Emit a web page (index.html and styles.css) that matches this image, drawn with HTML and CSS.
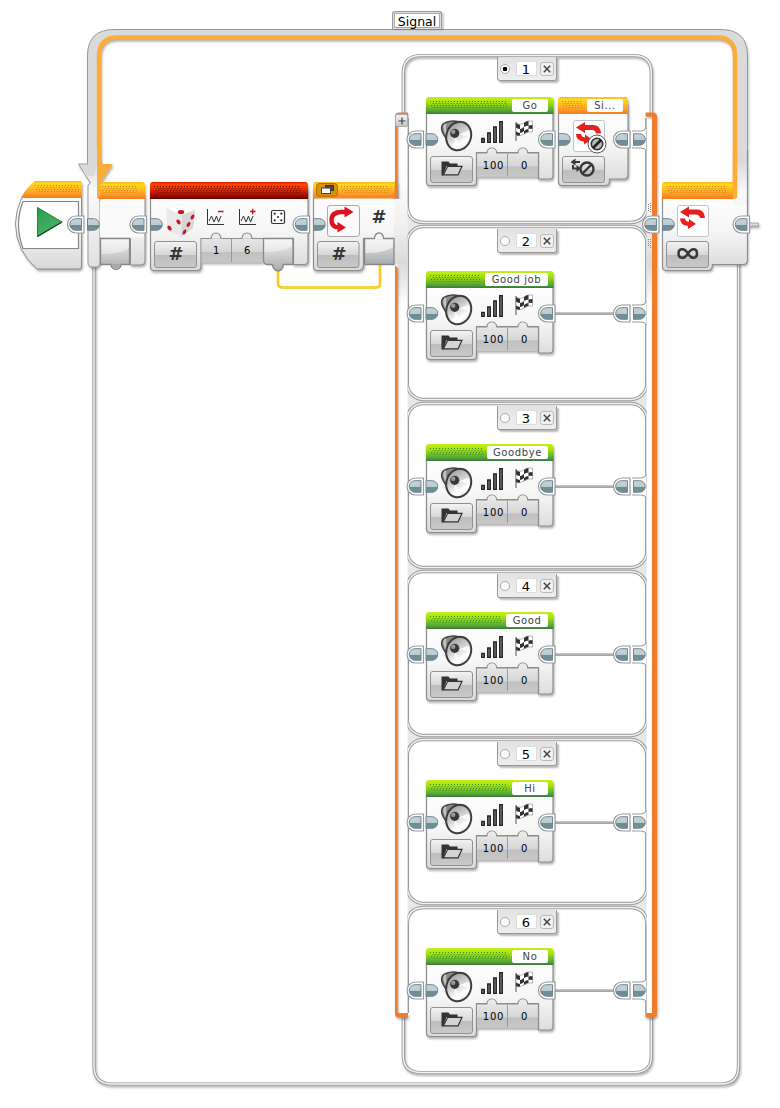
FILE: index.html
```html
<!DOCTYPE html>
<html lang="en">
<head>
<meta charset="utf-8">
<title>Signal program</title>
<link rel="stylesheet" href="styles.css">
</head>
<body>
<svg class="defs" width="0" height="0" aria-hidden="true">
  <defs>
    <linearGradient id="gGreen" x2="0" y2="1"><stop offset="0" stop-color="#c4f01c"/><stop offset=".3" stop-color="#a9e20d"/><stop offset=".85" stop-color="#4f9f3b"/><stop offset="1" stop-color="#38763c"/></linearGradient>
    <linearGradient id="gOrange" x2="0" y2="1"><stop offset="0" stop-color="#ffb31c"/><stop offset=".15" stop-color="#ffd91c"/><stop offset=".6" stop-color="#ffa928"/><stop offset="1" stop-color="#f67c1e"/></linearGradient>
    <linearGradient id="gRed" x2="0" y2="1"><stop offset="0" stop-color="#e01000"/><stop offset=".12" stop-color="#ff4a00"/><stop offset=".5" stop-color="#d92500"/><stop offset="1" stop-color="#6c0000"/></linearGradient>
    <linearGradient id="gBody" x2="0" y2="1"><stop offset="0" stop-color="#fff"/><stop offset=".5" stop-color="#f6f6f6"/><stop offset="1" stop-color="#d9d9d9"/></linearGradient>
    <linearGradient id="gBtn" x2="0" y2="1"><stop offset="0" stop-color="#f4f4f4"/><stop offset=".5" stop-color="#d7d7d7"/><stop offset=".52" stop-color="#bdbdbd"/><stop offset="1" stop-color="#c9c9c9"/></linearGradient>
    <linearGradient id="gVal" x2="0" y2="1"><stop offset="0" stop-color="#e6e6e6"/><stop offset=".55" stop-color="#d6d6d6"/><stop offset=".57" stop-color="#c0c0c0"/><stop offset="1" stop-color="#c8c8c8"/></linearGradient>
    <linearGradient id="gSlot" x2="0" y2="1"><stop offset="0" stop-color="#efeff0"/><stop offset=".5" stop-color="#cfcfd1"/><stop offset="1" stop-color="#a9aaad"/></linearGradient>
    <linearGradient id="gPlug" x2="0" y2="1"><stop offset="0" stop-color="#c6d3d9"/><stop offset=".5" stop-color="#bccbd2"/><stop offset=".52" stop-color="#6e8a92"/><stop offset="1" stop-color="#738f97"/></linearGradient>
    <linearGradient id="gPillar" gradientUnits="userSpaceOnUse" x1="0" y1="170" x2="0" y2="306"><stop offset="0" stop-color="#fff"/><stop offset=".4" stop-color="#f1f1f1"/><stop offset=".68" stop-color="#dadada"/><stop offset="1" stop-color="#fff"/></linearGradient>
    <linearGradient id="gLoop" gradientUnits="userSpaceOnUse" x1="0" y1="160" x2="0" y2="268"><stop offset="0" stop-color="#d9d9d9"/><stop offset=".3" stop-color="#fafafa"/><stop offset="1" stop-color="#e0e0e0"/></linearGradient>
    <linearGradient id="gPlay" x2=".5" y2="1"><stop offset="0" stop-color="#2a9c4a"/><stop offset="1" stop-color="#4db36b"/></linearGradient>
    <linearGradient id="gCone" x2="1" y2="1"><stop offset="0" stop-color="#8c8c8c"/><stop offset=".4" stop-color="#c9c9c9"/><stop offset=".7" stop-color="#fff"/><stop offset="1" stop-color="#ddd"/></linearGradient>

    <!-- plugs: the flat side lies on x = 0 -->
    <symbol id="plug-in" viewBox="-2 -9 18 18"><path d="M0-5.800H6A5.800 5.800 0 0 1 6 5.800H0Z" fill="url(#gPlug)" stroke="#6d8790"/></symbol>
    <symbol id="plug-out" viewBox="-17 -10 20 20"><path d="M1-8.500H-7A8.500 8.500 0 0 0-7 8.500H1Z" fill="#fff" stroke="#999" stroke-width="1.200"/><path d="M-1.500-5.800H-7.500A5.800 5.800 0 0 0-7.500 5.800H-1.500Z" fill="url(#gPlug)" stroke="#6d8790"/></symbol>
    <symbol id="cross" viewBox="0 0 12 12"><path d="M2.800 2.800 9.200 9.200M9.200 2.800 2.800 9.200" stroke="#444" stroke-width="1.500"/></symbol>

    <g id="speaker">
      <path d="M5 2Q11-.5 18 1.200L14 25Q7 22 3 14Q-2 5 5 2Z" fill="#8a8a8a" stroke="#444" stroke-width="1.500"/>
      <path d="M5 3.500Q2 7 7 16" stroke="#c4c4c4" stroke-width="2.500" fill="none"/>
      <ellipse cx="18" cy="15.500" rx="12.300" ry="14.500" transform="rotate(18 18 15.500)" fill="url(#gCone)" stroke="#3d3d3d" stroke-width="2"/>
      <path d="M18 14 28 10 29 16ZM15 17 12 27 20 28Z" fill="#fff" opacity=".8"/>
      <circle cx="14" cy="12.800" r="4.600" fill="#3a3a3a"/><circle cx="12.500" cy="11.300" r="2.200" fill="#999"/>
    </g>
    <g id="bars" fill="#777" stroke="#222" stroke-width="1.300"><path d="M.7 17.500h2.600v3.800H.7ZM6.700 12h2.600v9.300H6.700ZM12.700 6h2.600v15.300h-2.600ZM18.700.7h2.600v20.600h-2.600Z"/></g>
    <g id="flag">
      <path d="M1 2V21" stroke="#777" stroke-width="1.300"/>
      <path d="M1 3Q5 6 9 3T17.500 1V12Q13 11 9 14T1 15Z" fill="#fff" stroke="#999" stroke-width=".7"/>
      <path d="M1 3Q3 5 5 4.700V9Q3 9 1 7.500ZM9 3Q11 1 13.500 1V5.500Q11 5.500 9 7ZM5 9Q7 9 9 7V11Q7 13 5 13ZM13.500 5.500 17.500 5V9Q16 8.500 13.500 9ZM1 11.500Q3 12.500 5 13V15.500Q3 16 1 15ZM9 11Q11 9 13.500 9V12Q11 12 9 14Z" fill="#333"/>
    </g>
    <g id="folder">
      <path d="M0 15V1H7L8.500 3H16V5.500H5L1.500 15Z" fill="#333"/>
      <path d="M6.200 5.800H20.500L16.500 14.400H1.800Z" fill="#d4d4d4" stroke="#333" stroke-width="1.200"/>
    </g>
    <g id="dots"><path d="M0 .5H400" stroke-dasharray="1 2"/><path d="M1.500 2.500H400M0 4.500H400" stroke-dasharray="1 2" transform="translate(1)"/><path d="M3.500 6.500H400" stroke-dasharray="1 2"/></g>
    <g id="loopicon" fill="#e5201e"><path d="M0 5.500 9 0V3H17Q24.500 3 25 11.500H20Q19.500 8 16 8H9V11ZM0 12H5Q5.500 15 9 15.500V12.500L16 17.500 8 22.500V19.500Q0 18.500 0 12Z"/></g>

    <!-- sound block, local origin at the header's top left corner -->
    <symbol id="sound" viewBox="-20 -2 156 96">
      <g class="shadow">
        <path d="M.5 10H127V78.500Q127 82 124 82H112.500V55.500H50.500V85Q50.500 88.500 47 88.500H4Q.5 88.500 .5 85Z" fill="url(#gBody)" stroke="#8d8d8d" stroke-width="1.200"/>
        <path d="M0 17V3Q0 0 3 0H124.500Q127.500 0 127.500 3V17Z" fill="url(#gGreen)"/>
        <path d="M51 56H112V80H51Z" fill="url(#gVal)"/>
      </g>
      <path d="M50.500 56H60.800Q61.500 51 65.800 51T70.800 56H91.800Q92.500 51 96.800 51T101.800 56H112.500V81" fill="none" stroke="#8d8d8d" stroke-width="1.200"/>
      <path d="M61.400 56.600Q62 51.600 65.800 51.600T70.200 56.600ZM92.400 56.600Q93 51.600 96.800 51.600T101.200 56.600Z" fill="#e9e9e9"/>
      <path d="M81.500 57V79" stroke="#999"/>
      <rect x="4.500" y="59.500" width="42" height="26" rx="2.500" fill="url(#gBtn)" stroke="#929292"/>
      <use href="#speaker" x="14.700" y="23.500"/><use href="#bars" x="55" y="24"/><use href="#flag" x="89" y="23"/><use href="#folder" x="15.500" y="63.500"/>
      <use href="#plug-in" x="-2" y="33.500" width="18" height="18"/>
      <use href="#plug-out" x="111" y="32.500" width="20" height="20"/>
    </symbol>
    <!-- right-hand end of a case without further blocks -->
    <g id="ends"><path d="M632 131H641Q645.500 131 646 127.500V151Q645.500 148 641 148H632Z" fill="#fff"/><path d="M632 131H641Q645.500 131 646 127.500M632 148H641Q645.500 148 646 151" fill="none" stroke="#999"/><use href="#plug-out" x="612" y="129.500" width="20" height="20"/><use href="#plug-in" x="631.500" y="130.500" width="18" height="18"/></g>
    <g id="case-blocks"><path d="M554 139.500H618" class="wire"/><path d="M554 138.800H618" class="wire-top"/><use href="#plug-out" x="405.500" y="129.500" width="20" height="20"/><use href="#sound" x="406" y="95" width="156" height="96"/><use href="#ends"/></g>
    <clipPath id="inner"><rect x="407.600" y="50" width="239" height="1030"/></clipPath>
  </defs>
</svg>

<main class="program">
  <!-- frames: loop outline, switch pillars and case panels -->
  <svg class="scene" viewBox="0 0 780 1108">
    <g class="shadow">
      <path d="M94 262V1066Q94 1084 112 1084H721Q738.500 1084 738.500 1066V262" class="frame-dark"/>
    </g>
    <path d="M94 262V1066Q94 1084 112 1084H721Q738.500 1084 738.500 1066V262" class="frame-light"/>

    <g class="shadow">
      <path d="M87.500 170V56Q87.500 29.500 114 29.500H721Q747.500 29.500 747.500 56V190H736V54Q736 38 720 38H116Q99 38 99 54V170Z" fill="#dadada"/>
      <path d="M99 170V56Q99 37.500 118 37.500H717Q735 37.500 735 56V190" fill="none" stroke="#fcac38" stroke-width="4.500"/>
    </g>
    <path d="M87.500 164V56Q87.500 29.500 114 29.500H721Q747.500 29.500 747.500 56V190" fill="none" stroke="#999"/>

    <g class="shadow">
      <path d="M403.300 117V73Q403.300 55.500 421 55.500H634Q651.300 55.500 651.300 73V117" class="frame-dark"/>
      <path d="M403.300 1014V1056Q403.300 1072.500 421 1072.500H634Q651.300 1072.500 651.300 1056V1014" class="frame-dark"/>
    </g>
    <path d="M403.300 117V73Q403.300 55.500 421 55.500H634Q651.300 55.500 651.300 73V117M403.300 1014V1056Q403.300 1072.500 421 1072.500H634Q651.300 1072.500 651.300 1056V1014" class="frame-light"/>

    <path d="M397.500 116H408V1014H397.500ZM646.500 116H653V1014H646.500Z" fill="url(#gPillar)"/>
    <g class="shadow">
      <path d="M408 112.500H399Q395 112.500 395 116V198H397.700V116.500H408ZM395 265V1014Q395 1017.500 399 1017.500H408V1013H397.700V268Z" fill="#ee7e2c"/>
      <path d="M645.500 112.500H653Q657 112.500 657 117V1013Q657 1017.500 653 1017.500H645.500V1013H652V116.500H645.500Z" fill="#ee7e2c"/>
    </g>

    <g clip-path="url(#inner)">
      <path d="M400 205H655V245H400ZM400 385H655V420H400ZM400 552H655V588H400ZM400 720H655V756H400ZM400 888H655V924H400Z" fill="#e8e8e8"/>
      <g class="panel">
        <path d="M407.300 118V205Q407.300 222.500 425 222.500H629Q646.800 222.500 646.800 205V118"/>
        <rect x="407.300" y="226.500" width="239.500" height="173" rx="16"/>
        <rect x="407.300" y="403.500" width="239.500" height="164" rx="16"/>
        <rect x="407.300" y="571.500" width="239.500" height="164" rx="16"/>
        <rect x="407.300" y="739.500" width="239.500" height="164" rx="16"/>
        <path d="M407.300 1013V924Q407.300 907.500 425 907.500H629Q646.800 907.500 646.800 924V1013"/>
      </g>
      <g class="frame-light">
        <path d="M407.300 205Q407.300 222.500 425 222.500H629Q646.800 222.500 646.800 205M407.300 924Q407.300 907.500 425 907.500H629Q646.800 907.500 646.800 924"/>
        <rect x="407.300" y="226.500" width="239.500" height="173" rx="16"/>
        <rect x="407.300" y="403.500" width="239.500" height="164" rx="16"/>
        <rect x="407.300" y="571.500" width="239.500" height="164" rx="16"/>
        <rect x="407.300" y="739.500" width="239.500" height="164" rx="16"/>
      </g>
    </g>
    <path d="M648.500 204V212M650.500 203V212M648.500 239V247M650.500 239V248" stroke="#888" stroke-dasharray="1 1"/>
    <path d="M278 268V283Q278 287.500 283 287.500H376Q380 287.500 380 283V264" fill="none" stroke="#f5c400" stroke-width="2.600"/>
    <path d="M278 268V283Q278 287.500 283 287.500H376Q380 287.500 380 283V264" fill="none" stroke="#ffd84a" stroke-width=".8"/>
  </svg>

  <div class="signal">Signal</div>
  <div class="expand"><svg viewBox="0 0 10 10"><path d="M5 1.500V8.500M1.500 5H8.500" stroke="#444" stroke-width="1.200"/></svg></div>

  <!-- main row of blocks -->
  <svg class="row" viewBox="0 150 780 150">
    <!-- start -->
    <g class="shadow">
      <path d="M35 181.500H79Q81.500 181.500 81.500 184V266Q81.500 269 79 269H37Q16 251 15.500 224Q16 198 35 181.500Z" fill="url(#gBody)" stroke="#8d8d8d"/>
      <path d="M35 181H79Q82 181 82 184V198H21Q26 188 35 181Z" fill="url(#gOrange)"/>
    </g>
    <path d="M23 201.500H78.500V248.500H23Q14 224 23 201.500Z" fill="#fff" stroke="#858585" stroke-width="1.200"/>
    <path d="M37.500 207.500V236.500L62 222Z" fill="url(#gPlay)" stroke="#178a3c"/>
    <path d="M37.500 236.500 62 222" stroke="#0c4f22" stroke-width="1.400"/>
    <use href="#dots" class="dots clip44" x="35" y="185"/>

    <!-- loop start -->
    <g class="shadow">
      <path d="M98 195H145V261Q145 265 141 265H130.500V238.500H99Z" fill="url(#gBody)" stroke="#8d8d8d"/>
      <path d="M88 160V164H78.500L90.500 183 88 185V262Q88 267 92 267H96Q100 267 100 262V160Z" fill="url(#gLoop)" stroke="#999"/>
      <path d="M97.500 164H113L101.500 181.500H97.500Z" fill="#fcac38"/>
      <path d="M101 182H142Q145 182 145 185V199H100Q97 199 97 195Z" fill="url(#gOrange)"/>
    </g>
    <path d="M88 150H97V166L94 176H86L80 165H88Z" fill="#dadada"/><path d="M87.500 150V164" stroke="#999"/>
    <path d="M97 150H101.300V182H100V197Q97 197 97 194Z" fill="#fcac38"/>
    <use href="#dots" class="dots clip35" x="102" y="186"/>
    <path d="M100 201H144V237H100Z" fill="#fafafa"/>
    <path d="M100.500 238.500H129.500V264.500H121A5 5 0 0 1 111 264.500H100.500Z" fill="url(#gSlot)" stroke="#888" stroke-width="1.300"/>
    <path d="M112 264H120V266Q119 269.500 116 269.500T112 266Z" fill="#a9aaad"/>
    <path d="M101.500 239.500H129V248Q120 254 101.500 254Z" fill="#fff" opacity=".45"/>

    <!-- random -->
    <g class="shadow">
      <path d="M150.500 190H308V261Q308 264.500 304 264.500H293.500V238.500H201V267Q201 270.500 197 270.500H154Q150.500 270.500 150.500 267Z" fill="url(#gBody)" stroke="#8d8d8d" stroke-width="1.200"/>
      <path d="M150 199V185Q150 182 153 182H305Q308 182 308 185V199Z" fill="url(#gRed)"/>
      <path d="M201.500 238.500H263V262.500H201.500Z" fill="url(#gVal)"/>
    </g>
    <path d="M201 238.500H211Q211.500 233 216 233T221 238.500H242Q242.500 233 247 233T252 238.500H263" fill="#ececec" stroke="#8d8d8d" stroke-width="1.200"/>
    <path d="M231.500 239V262" stroke="#999"/>
    <path d="M263.500 238.500H293V264.500H283A5 5 0 0 1 273 267Q273 264.500 271 264.500H267Q263.500 264.500 263.500 260Z" fill="url(#gSlot)" stroke="#888" stroke-width="1.300"/>
    <path d="M264.500 239.500H292V246Q283 252 264.500 252Z" fill="#fff" opacity=".45"/>
    <rect x="154.500" y="241.500" width="42" height="26" rx="2.500" fill="url(#gBtn)" stroke="#929292"/>
    <path d="M166.500 209 181 204.500 195 210 182 215Z" fill="#fff" stroke="#eaeaea" stroke-width=".6"/><path d="M166.500 209 182 215 181 237 167 229.500Z" fill="#e9e9e9"/><path d="M195 210 182 215 181 237 193 228Z" fill="#d6d6d6"/>
    <g fill="#d31021"><ellipse cx="181" cy="212" rx="3.300" ry="2"/><ellipse cx="178.500" cy="222" rx="1.800" ry="2.600" transform="rotate(-35 178.500 222)"/><ellipse cx="169.500" cy="228" rx="1.800" ry="2.700" transform="rotate(-35 169.500 228)"/><ellipse cx="192.500" cy="217" rx="1.600" ry="2.700" transform="rotate(28 192.500 217)"/><ellipse cx="188.500" cy="224.500" rx="1.600" ry="2.700" transform="rotate(28 188.500 224.500)"/><ellipse cx="184.500" cy="232" rx="1.600" ry="2.700" transform="rotate(28 184.500 232)"/></g>
    <g fill="none" stroke="#333"><path d="M207.500 209V224.500H224M209 221 211.500 216 214 222 216.500 216 218.500 222 221 216"/><path d="M239.500 209V224.500H256M241 221 243.500 216 246 222 248.500 216 250.500 222 253 216"/></g>
    <path d="M218 211.500H223.500M250 211.500H255.500M252.700 208.800V214.300" stroke="#d31021" stroke-width="1.400"/>
    <rect x="271.500" y="210.500" width="13" height="13" rx="1.500" fill="#fff" stroke="#333" stroke-width="1.200"/>
    <g fill="#333"><circle cx="274.700" cy="213.700" r="1.100"/><circle cx="281.300" cy="213.700" r="1.100"/><circle cx="278" cy="217" r="1.100"/><circle cx="274.700" cy="220.300" r="1.100"/><circle cx="281.300" cy="220.300" r="1.100"/></g>
    <use href="#dots" class="dots red clip145" x="154" y="186"/>

    <!-- switch -->
    <g class="shadow">
      <path d="M313.500 190H397V238.500H363.500V266Q363 270 359 270.500H317Q313.500 270.500 313.500 267Z" fill="url(#gBody)" stroke="#8d8d8d" stroke-width="1.200"/>
      <path d="M313 198.500V185Q313 182 316 182H397.500V196Q397 198.500 395 198.500Z" fill="url(#gOrange)"/>
    </g>
    <path d="M394 199H405V264.500H394Z" fill="url(#gPillar)"/>
    <path d="M395 180H397.600V196Q397 199 394 199Z" fill="#ee7e2c"/>
    <rect x="316.500" y="183.500" width="21" height="12.500" rx="3" fill="#d79403" stroke="#a86b0d"/>
    <rect x="325.500" y="185.500" width="8" height="5" fill="#444" stroke="#333"/><rect x="321.500" y="188" width="9" height="5.500" fill="#fff" stroke="#444"/>
    <rect x="327.500" y="205.500" width="32" height="31" rx="2.500" fill="#fbfbfb" stroke="#aaa"/>
    <path d="M345.500 212H341Q331.500 212.500 331.500 220Q331.500 227.500 339 227.500" fill="none" stroke="#e0101c" stroke-width="4.400"/>
    <path d="M344.500 206.500 353.500 212 344.500 217.500ZM337.500 222 346 227.500 337.500 232.500Z" fill="#e0101c"/>
    <rect x="317.500" y="241.500" width="41.500" height="26" rx="2.500" fill="url(#gBtn)" stroke="#929292"/>
    <path d="M364.500 238.500H374.500Q375 233 379 233T383.500 238.500H394V264.500H364.500Z" fill="url(#gSlot)" stroke="#888" stroke-width="1.300"/>
    <path d="M365.500 239.500H393V247Q384 253 365.500 253ZM375.200 239Q375.500 233.700 379 233.700T382.800 239Z" fill="#fff" opacity=".6"/>
    <use href="#dots" class="dots clip45" x="341" y="186"/>

    <!-- loop end -->
    <g class="shadow">
      <path d="M662.500 190H747.500V260Q747.500 264.500 743 264.500H712.500V267Q712 270.500 708.500 270.500H666Q662.500 270.500 662.500 267Z" fill="url(#gBody)"/>
      <path d="M662 199V185Q662 182 665 182H737V199Z" fill="url(#gOrange)"/>
    </g>
    <path d="M737 150H747V205H733V198H737Z" fill="url(#gLoop)"/>
    <path d="M732.800 150H737.300V196Q737 199 732.800 199Z" fill="#fcac38"/>
    <path d="M662.500 199V267Q662.500 270.500 666 270.500H708.500Q712.500 270.500 712.500 264.500H743Q747.500 264.500 747.500 260V150" fill="none" stroke="#8d8d8d" stroke-width="1.200"/>
    <rect x="677.500" y="205.500" width="31" height="31" rx="2" fill="#fff" stroke="#c4c4c4"/>
    <use href="#loopicon" x="680" y="206.500"/>
    <rect x="666.500" y="241.500" width="42" height="26" rx="2.500" fill="url(#gBtn)" stroke="#929292"/>
    <path d="M688 253.500C684 247 678.500 248.500 678.500 253.500S684 260 688 253.500S697 248.500 697 253.500S692 260 688 253.500Z" fill="none" stroke="#383838" stroke-width="2.500"/>
    <use href="#dots" class="dots clip60" x="667" y="186"/>
    <g class="shadow"><path d="M747 218Q748.500 223 751 223H758.500V226H751Q748.500 226 747 231Z" fill="#ddd" stroke="#999" stroke-width=".8"/></g>

    <!-- plugs along the sequence wire -->
    <use href="#plug-out" x="66" y="214.500" width="20" height="20"/><use href="#plug-in" x="85.500" y="215.500" width="18" height="18"/>
    <use href="#plug-out" x="128.500" y="214.500" width="20" height="20"/><use href="#plug-in" x="148.500" y="215.500" width="18" height="18"/>
    <use href="#plug-out" x="291.500" y="214.500" width="20" height="20"/><use href="#plug-in" x="311.500" y="215.500" width="18" height="18"/>
    <use href="#plug-out" x="641" y="214.500" width="20" height="20"/><use href="#plug-in" x="660.500" y="215.500" width="18" height="18"/>
    <use href="#plug-out" x="731.500" y="214.500" width="20" height="20"/>
  </svg>
  <span class="hash h1">#</span><span class="hash h2">#</span><span class="hash h3">#</span>
  <div class="nums"><span>1</span><span>6</span></div>

  <!-- switch cases -->
  <section class="case c1">
    <div class="tab"><i class="radio on"></i><b>1</b><svg class="close"><use href="#cross"/></svg></div>
    <svg class="art" viewBox="400 95 254 96">
      <use href="#plug-out" x="405.500" y="129.500" width="20" height="20"/>
      <use href="#sound" x="406" y="95" width="156" height="96"/>
      <use href="#dots" class="dots green clip77" x="430" y="101"/>
      <g class="shadow">
        <path d="M558.500 105H628V175Q628 179 624 179H609.500V182Q609 185.500 605 185.500H562Q558.500 185.500 558.500 182Z" fill="url(#gBody)" stroke="#8d8d8d" stroke-width="1.200"/>
        <path d="M558 114V100Q558 97 561 97H625Q628 97 628 100V114Z" fill="url(#gOrange)"/>
      </g>
      <use href="#dots" class="dots clip20" x="562" y="101"/>
      <rect x="573.500" y="120.500" width="31" height="31" rx="2" fill="#fff" stroke="#c4c4c4"/>
      <use href="#loopicon" x="576" y="122"/>
      <circle cx="597" cy="144" r="9" fill="#fff" stroke="#555"/><circle cx="597" cy="144" r="5.700" fill="#bbb" stroke="#333" stroke-width="1.600"/><path d="M593 148 601 140" stroke="#222" stroke-width="2.500"/>
      <rect x="562.500" y="156.500" width="42" height="26" rx="2.500" fill="url(#gBtn)" stroke="#929292"/>
      <g fill="none" stroke="#383838" stroke-width="2"><path d="M574 162H580M573 165V168.500H578"/><circle cx="587" cy="169" r="6.500" stroke-width="2.400"/><path d="M582.500 173.500 591.500 164.500" stroke-width="2.400"/></g>
      <path d="M570.500 162 575.500 158.500V165.500ZM581 168.500 576.500 165V172Z" fill="#383838"/>
      <use href="#plug-in" x="556.500" y="130.500" width="18" height="18"/>
      <use href="#ends"/>
    </svg>
    <div class="title">Go</div><div class="title si">Si...</div><div class="nums"><span>100</span><span>0</span></div>
  </section>
  <section class="case c2">
    <div class="tab"><i class="radio"></i><b>2</b><svg class="close"><use href="#cross"/></svg></div>
    <svg class="art" viewBox="400 95 254 96"><use href="#case-blocks"/><use href="#dots" class="dots green clip50" x="430" y="101"/></svg>
    <div class="title wide">Good job</div><div class="nums"><span>100</span><span>0</span></div>
  </section>
  <section class="case c3">
    <div class="tab"><i class="radio"></i><b>3</b><svg class="close"><use href="#cross"/></svg></div>
    <svg class="art" viewBox="400 95 254 96"><use href="#case-blocks"/><use href="#dots" class="dots green clip53" x="430" y="101"/></svg>
    <div class="title wide2">Goodbye</div><div class="nums"><span>100</span><span>0</span></div>
  </section>
  <section class="case c4">
    <div class="tab"><i class="radio"></i><b>4</b><svg class="close"><use href="#cross"/></svg></div>
    <svg class="art" viewBox="400 95 254 96"><use href="#case-blocks"/><use href="#dots" class="dots green clip71" x="430" y="101"/></svg>
    <div class="title mid">Good</div><div class="nums"><span>100</span><span>0</span></div>
  </section>
  <section class="case c5">
    <div class="tab"><i class="radio"></i><b>5</b><svg class="close"><use href="#cross"/></svg></div>
    <svg class="art" viewBox="400 95 254 96"><use href="#case-blocks"/><use href="#dots" class="dots green clip77" x="430" y="101"/></svg>
    <div class="title">Hi</div><div class="nums"><span>100</span><span>0</span></div>
  </section>
  <section class="case c6">
    <div class="tab"><i class="radio"></i><b>6</b><svg class="close"><use href="#cross"/></svg></div>
    <svg class="art" viewBox="400 95 254 96"><use href="#case-blocks"/><use href="#dots" class="dots green clip77" x="430" y="101"/></svg>
    <div class="title">No</div><div class="nums"><span>100</span><span>0</span></div>
  </section>
</main>
</body>
</html>
```

FILE: styles.css
```css
body { margin: 0; background: #fff; font-family: "DejaVu Sans", Verdana, sans-serif; color: #000; }
.defs { position: absolute; }
.program { position: relative; width: 780px; height: 1108px; overflow: hidden; }
.scene { position: absolute; left: 0; top: 0; width: 780px; height: 1108px; }
.row { position: absolute; left: 0; top: 150px; width: 780px; height: 150px; }

.shadow { filter: drop-shadow(1.5px 2px 1.2px rgba(0, 0, 0, .3)); }
.frame-dark { fill: none; stroke: #999; stroke-width: 3.2; }
.frame-light { fill: none; stroke: #f4f4f4; stroke-width: 1.4; }
.panel { fill: #fff; stroke: #999; stroke-width: 3.4; }
.wire { fill: none; stroke: #a6a6a6; stroke-width: 2.8; }
.wire-top { fill: none; stroke: #d0d0d0; stroke-width: 1; }

.dots { fill: none; stroke: #cc7a20; stroke-width: 1; }
.dots.red { stroke: #5e0500; }
.dots.green { stroke: #2f8d1e; }
.clip20 { clip-path: inset(0 calc(100% - 20px) 0 0); }
.clip35 { clip-path: inset(0 calc(100% - 35px) 0 0); }
.clip44 { clip-path: inset(0 calc(100% - 44px) 0 0); }
.clip45 { clip-path: inset(0 calc(100% - 48px) 0 0); }
.clip50 { clip-path: inset(0 calc(100% - 50px) 0 0); }
.clip53 { clip-path: inset(0 calc(100% - 53px) 0 0); }
.clip60 { clip-path: inset(0 calc(100% - 60px) 0 0); }
.clip71 { clip-path: inset(0 calc(100% - 71px) 0 0); }
.clip77 { clip-path: inset(0 calc(100% - 77px) 0 0); }
.clip145 { clip-path: inset(0 calc(100% - 147px) 0 0); }

.signal { position: absolute; left: 392px; top: 11px; width: 50px; height: 18px; box-sizing: border-box; border: 1px solid #999; border-bottom: 0; border-radius: 3px 3px 0 0; background: #fff; box-shadow: inset 0 0 0 1px #ddd, inset 0 0 0 2px #aaa, 2px 1px 2px rgba(0, 0, 0, .2); font-size: 12.5px; line-height: 19px; text-align: center; }
.expand { position: absolute; left: 395px; top: 114px; width: 13px; height: 13px; box-sizing: border-box; border: 1px solid #aaa; border-radius: 2px; background: linear-gradient(#f4f4f4, #c8c8c8); display: flex; align-items: center; justify-content: center; }
.expand svg { width: 10px; height: 10px; }

.hash { position: absolute; width: 20px; text-align: center; font: bold 18px/20px "DejaVu Sans", sans-serif; color: #333; }
.h1 { left: 166px; top: 244px; }
.h2 { left: 329px; top: 244px; }
.h3 { left: 369px; top: 207px; }

.nums { position: absolute; left: 201px; top: 244px; width: 62px; display: grid; grid-template-columns: 1fr 1fr; font-size: 10px; line-height: 14px; letter-spacing: .8px; text-align: center; }

.case { position: absolute; left: 400px; width: 254px; height: 136px; }
.c1 { top: 55px; }
.c2 { top: 227px; }
.c3 { top: 404px; }
.c4 { top: 572px; }
.c5 { top: 740px; }
.c6 { top: 908px; }
.art { position: absolute; left: 0; top: 38px; width: 254px; height: 96px; }
.c1 .art { top: 40px; }
.c2 .art { top: 42px; }

.tab { position: absolute; left: 97px; top: 2px; width: 60px; height: 24px; box-sizing: border-box; padding: 0 2px; border: 1px solid #999; border-top: 0; border-radius: 0 0 3px 3px; background: linear-gradient(#e2e2e2, #eee); box-shadow: 2px 2px 2px rgba(0, 0, 0, .28); display: flex; align-items: center; justify-content: space-between; }
.radio { width: 10px; height: 10px; box-sizing: border-box; border: 1px solid #aaa; border-radius: 50%; background: #fff; }
.radio.on { background: radial-gradient(circle, #000 0 2px, #fff 2.6px); }
.tab b { width: 19px; height: 13px; margin-left: 2px; border: 1px solid #ddd; background: #fff; font: 13px/15px "DejaVu Sans", sans-serif; text-align: center; }
.close { width: 14px; height: 14px; box-sizing: border-box; border: 1px solid #bbb; border-radius: 3px; background: #f0f0f0; }

.title { position: absolute; left: 112px; top: 42px; width: 36px; height: 13px; border-radius: 2px; background: #fff; color: #444; font-size: 10px; line-height: 13px; letter-spacing: .6px; text-align: center; }
.c1 .title { top: 44px; }
.c2 .title { top: 46px; }
.title.si { left: 187px; }
.title.wide { left: 85px; width: 63px; }
.title.wide2 { left: 87px; width: 61px; }
.title.mid { left: 106px; width: 42px; }
.case .nums { left: 78px; top: 102px; width: 62px; }
.c1 .nums { top: 104px; }
.c2 .nums { top: 106px; }
```
